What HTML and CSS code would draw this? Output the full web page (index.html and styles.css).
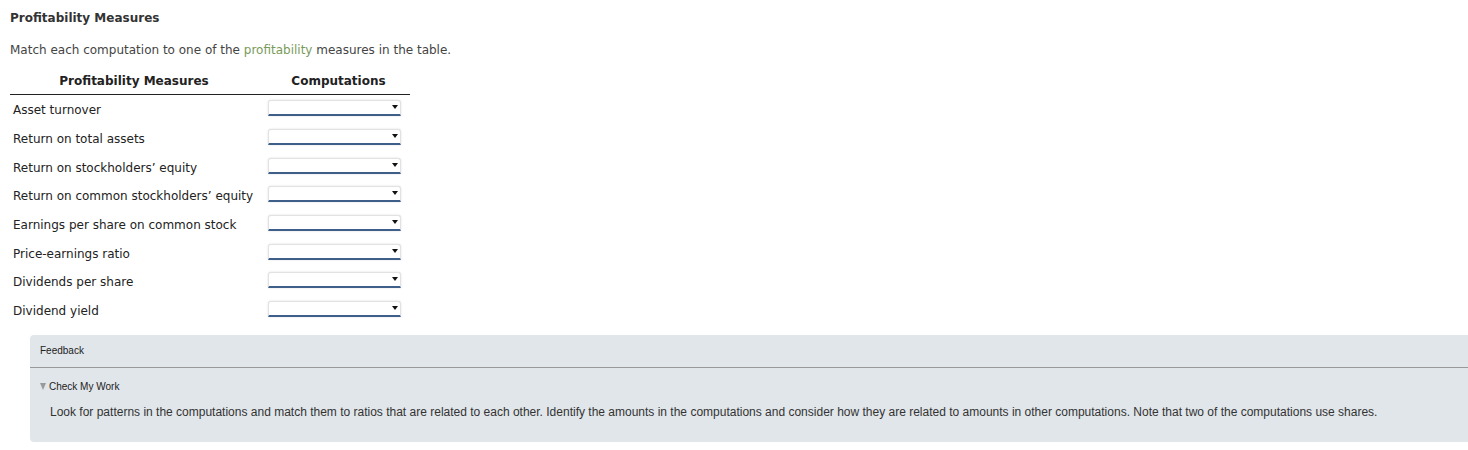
FILE: index.html
```html
<!DOCTYPE html>
<html lang="en">
<head>
    <meta charset="UTF-8">
    <title>Profitability Measures</title>
    <link rel="stylesheet" href="styles.css">
</head>
<body>
    <div class="page">
        <h3 class="title">Profitability Measures</h3>
        <p class="intro">Match each computation to one of the <span class="term">profitability</span> measures in the table.</p>

        <table class="match-table">
            <thead>
                <tr>
                    <th class="col-measure">Profitability Measures</th>
                    <th class="col-comp">Computations</th>
                </tr>
            </thead>
            <tbody>
                <tr><td>Asset turnover</td><td class="cell-select"><div class="select-box"><span class="arrow"></span></div></td></tr>
                <tr><td>Return on total assets</td><td class="cell-select"><div class="select-box"><span class="arrow"></span></div></td></tr>
                <tr><td>Return on stockholders&#8217; equity</td><td class="cell-select"><div class="select-box"><span class="arrow"></span></div></td></tr>
                <tr><td>Return on common stockholders&#8217; equity</td><td class="cell-select"><div class="select-box"><span class="arrow"></span></div></td></tr>
                <tr><td>Earnings per share on common stock</td><td class="cell-select"><div class="select-box"><span class="arrow"></span></div></td></tr>
                <tr><td>Price-earnings ratio</td><td class="cell-select"><div class="select-box"><span class="arrow"></span></div></td></tr>
                <tr><td>Dividends per share</td><td class="cell-select"><div class="select-box"><span class="arrow"></span></div></td></tr>
                <tr><td>Dividend yield</td><td class="cell-select"><div class="select-box"><span class="arrow"></span></div></td></tr>
            </tbody>
        </table>

        <!-- feedback panel -->
        <div class="feedback">
            <div class="feedback-head">Feedback</div>
            <div class="feedback-body">
                <div class="check-title"><span class="tri"></span>Check My Work</div>
                <p class="hint">Look for patterns in the computations and match them to ratios that are related to each other. Identify the amounts in the computations and consider how they are related to amounts in other computations. Note that two of the computations use shares.</p>
            </div>
        </div>
    </div>
</body>
</html>
```

FILE: styles.css
```css
body {
    margin: 0;
    font-family: "DejaVu Sans", Verdana, sans-serif;
    color: #333;
    background: white;
    overflow: hidden;
}

.page {
    padding: 11px 0 0 10px;
}

.title {
    margin: 0;
    font-size: 12px;
    line-height: 14px;
    font-weight: bold;
    color: #333;
}

.intro {
    margin: 18px 0 0 0;
    font-size: 12px;
    line-height: 14px;
    color: #444;
}

.term {
    color: #7a9a5a;
}

.match-table {
    margin-top: 12px;
    width: 400px;
    border-collapse: collapse;
    font-size: 12px;
    line-height: 14px;
}

.match-table th {
    font-weight: bold;
    color: #222;
    text-align: center;
    padding: 5px 0 6px 0;
    border-bottom: 1px solid #222;
}

.col-measure {
    width: 248px;
}

.match-table th.col-comp {
    padding-left: 9px;
}

.match-table td {
    height: 26.7px;
    padding: 2px 0 0 3px;
    color: #222;
    white-space: nowrap;
}

.match-table td.cell-select {
    padding: 0 0 2px 10px;
}

.select-box {
    position: relative;
    width: 131px;
    height: 13px;
    border: 1px solid #e2e2e2;
    border-bottom: 2px solid #3e5f8a;
    border-radius: 3px 3px 0 0;
    box-shadow: 0 0 2px rgba(0,0,0,0.15);
    background: white;
}

.arrow {
    position: absolute;
    right: 2px;
    top: 4px;
    width: 0;
    height: 0;
    border-left: 3.5px solid transparent;
    border-right: 3.5px solid transparent;
    border-top: 4px solid #111;
}

.feedback {
    margin: 10px 0 0 20px;
    width: 1448px;
    background-color: #e1e6ea;
    border-radius: 4px 0 0 4px;
    font-family: "Liberation Sans", Arial, sans-serif;
    color: #222;
}

.feedback-head {
    font-size: 10px;
    line-height: 11px;
    padding: 10px 0 11px 10px;
    border-bottom: 1px solid #999;
}

.feedback-body {
    padding: 13px 0 23px 10px;
}

.check-title {
    font-size: 10px;
    line-height: 11px;
}

.tri {
    display: inline-block;
    width: 0;
    height: 0;
    border-left: 3.5px solid transparent;
    border-right: 3.5px solid transparent;
    border-top: 7px solid #9a9a9a;
    margin-right: 3px;
}

.hint {
    margin: 13px 0 0 10px;
    font-size: 12px;
    line-height: 14px;
    color: #333;
}
```
